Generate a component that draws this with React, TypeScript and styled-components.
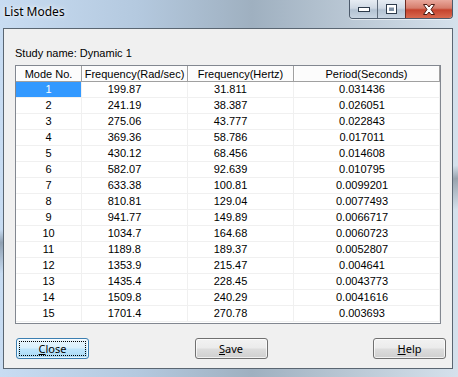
import React from 'react';
import styled, {createGlobalStyle} from 'styled-components'

const GlobalStyle = createGlobalStyle`
  html, body {
    margin: 0;
    padding: 0;
    overflow: hidden;
    background: #ffffff;
  }
`

const Window = styled.div`
  width: 458px;
  height: 377px;
  box-sizing: border-box;
  display: flex;
  flex-direction: column;
  background:
    linear-gradient(172deg, transparent 0 52%, rgba(40, 50, 60, 0.35) 55%, transparent 62%),
    linear-gradient(90deg, #c8dcf2 0%, #b4c9df 30%, #9fb0c0 55%, #b8c6d3 75%, #d5e1ec 100%);
`

const TitleBar = styled.div`
  height: 28px;
  flex: none;
  display: flex;
  justify-content: space-between;
  align-items: flex-start;
  padding-left: 4px;
`

const Title = styled.span`
  font-family: "Noto Sans", "Open Sans", sans-serif;
  font-size: 12px;
  line-height: 16px;
  margin-top: 4px;
  color: #000;
  text-shadow: 0 0 6px rgba(255, 255, 255, 0.9), 0 0 3px rgba(255, 255, 255, 0.9);
`

const CaptionButtons = styled.div`
  display: flex;
  margin-right: 5px;
  border: 1px solid #4c5a6b;
  border-top: 0;
  border-radius: 0 0 4px 4px;
  overflow: hidden;
  box-shadow: 0 1px 0 rgba(255, 255, 255, 0.6);
`

const CaptionButton = styled.div<{ close?: boolean }>`
  width: ${({close}) => (close ? '46px' : '27px')};
  height: 18px;
  flex: none;
  display: flex;
  align-items: center;
  justify-content: center;
  border-left: ${({close}) => (close ? '1px solid #6b2a20' : '1px solid #5e6b7a')};
  background: ${({close}) => close
    ? 'linear-gradient(180deg, #e9a89c 0%, #d67d6c 45%, #c5432d 55%, #d96a4f 100%)'
    : 'linear-gradient(180deg, #e6ecf3 0%, #cfd9e4 45%, #b3c2d2 55%, #c8d5e2 100%)'};

  &:first-child {
    border-left: 0;
  }
`

const Client = styled.div`
  margin-left: 3px;
  width: 450px;
  height: 341px;
  box-sizing: border-box;
  border: 1px solid #5a6672;
  background: #f0f0f0;
  padding: 18px 6px 0 11px;
  display: flex;
  flex-direction: column;
`

const Label = styled.div`
  font-family: "Liberation Sans", Arial, sans-serif;
  font-size: 11px;
  line-height: 13px;
  color: #000;
  height: 13px;
  margin-bottom: 5px;
`

const ListFrame = styled.div`
  width: 426px;
  height: 259px;
  flex: none;
  box-sizing: border-box;
  border: 1px solid #828790;
  background: #ffffff;
  overflow: hidden;
`

const Table = styled.table`
  width: 424px;
  table-layout: fixed;
  border-collapse: separate;
  border-spacing: 0;
  font-family: "Liberation Sans", Arial, sans-serif;
  font-size: 11px;
  color: #000;
`

const Th = styled.th`
  height: 16px;
  box-sizing: border-box;
  padding: 0;
  font-weight: normal;
  text-align: center;
  background: #fcfcfc;
  border-right: 1px solid #a0a0a0;
  border-bottom: 1px solid #a0a0a0;
  box-shadow: inset 1px 0 0 #ffffff;
  line-height: 14px;
`

const Td = styled.td<{ shift: number, selected?: boolean }>`
  height: 16px;
  box-sizing: border-box;
  padding: 0 ${({shift}) => shift}px 0 0;
  line-height: 15px;
  text-align: center;
  border-right: 1px solid #f0f0f0;
  border-bottom: 1px solid #f0f0f0;
  background: ${({selected}) => (selected ? '#3399ff' : '#ffffff')};
  color: ${({selected}) => (selected ? '#ffffff' : '#000000')};
  white-space: nowrap;
`

const ButtonRow = styled.div`
  display: flex;
  justify-content: space-between;
  margin-top: 14px;
  padding-left: 1px;
`

const Button = styled.div<{ focused?: boolean }>`
  width: 73px;
  height: 21px;
  box-sizing: border-box;
  border: 1px solid ${({focused}) => (focused ? '#3c7fb1' : '#707070')};
  border-radius: 3px;
  background: ${({focused}) => focused
    ? 'linear-gradient(180deg, #eaf6fd 0%, #d9f0fc 48%, #bee6fd 52%, #a7d9f5 100%)'
    : 'linear-gradient(180deg, #f2f2f2 0%, #ebebeb 48%, #dddddd 52%, #cfcfcf 100%)'};
  box-shadow: inset 0 0 0 1px rgba(255, 255, 255, 0.7);
  display: flex;
  align-items: center;
  justify-content: center;
  padding: 2px;
  font-family: "Noto Sans", "Open Sans", sans-serif;
  font-size: 11px;
  color: #000;
`

const FocusRect = styled.span<{ focused?: boolean }>`
  flex: 1;
  align-self: stretch;
  display: flex;
  align-items: center;
  justify-content: center;
  border: 1px dotted ${({focused}) => (focused ? '#000' : 'transparent')};
`

const Key = styled.span`
  text-decoration: underline;
`

const rows = [
    ['1', '199.87', '31.811', '0.031436'],
    ['2', '241.19', '38.387', '0.026051'],
    ['3', '275.06', '43.777', '0.022843'],
    ['4', '369.36', '58.786', '0.017011'],
    ['5', '430.12', '68.456', '0.014608'],
    ['6', '582.07', '92.639', '0.010795'],
    ['7', '633.38', '100.81', '0.0099201'],
    ['8', '810.81', '129.04', '0.0077493'],
    ['9', '941.77', '149.89', '0.0066717'],
    ['10', '1034.7', '164.68', '0.0060723'],
    ['11', '1189.8', '189.37', '0.0052807'],
    ['12', '1353.9', '215.47', '0.004641'],
    ['13', '1435.4', '228.45', '0.0043773'],
    ['14', '1509.8', '240.29', '0.0041616'],
    ['15', '1701.4', '270.78', '0.003693'],
]

const shifts = [0, 20, 20, 9]

const MinimizeIcon = () => (
    <svg width="12" height="6" viewBox="0 0 12 6">
        <rect x="0.5" y="1.5" width="11" height="4" fill="#fff" stroke="#2d3b4b"/>
    </svg>
)

const MaximizeIcon = () => (
    <svg width="11" height="10" viewBox="0 0 11 10">
        <rect x="0.5" y="0.5" width="10" height="9" fill="#fff" stroke="#2d3b4b"/>
        <rect x="3" y="3.5" width="5" height="3.5" fill="#7d8fa3"/>
    </svg>
)

const CloseIcon = () => (
    <svg width="14" height="11" viewBox="0 0 14 11">
        <path d="M1.5 0.5 H5 L7 3 L9 0.5 H12.5 L9 5.5 L12.5 10.5 H9 L7 8 L5 10.5 H1.5 L5 5.5 Z"
              fill="#fff" stroke="#4a1a12" strokeWidth="1"/>
    </svg>
)

const App: React.FC = () => {
    return (
        <Window>
            <GlobalStyle/>
            <TitleBar>
                <Title>List Modes</Title>
                <CaptionButtons>
                    <CaptionButton><MinimizeIcon/></CaptionButton>
                    <CaptionButton><MaximizeIcon/></CaptionButton>
                    <CaptionButton close><CloseIcon/></CaptionButton>
                </CaptionButtons>
            </TitleBar>
            <Client>
                <Label>Study name: Dynamic 1</Label>
                <ListFrame>
                    <Table>
                        <colgroup>
                            <col style={{width: 66}}/>
                            <col style={{width: 106}}/>
                            <col style={{width: 106}}/>
                            <col style={{width: 146}}/>
                        </colgroup>
                        <thead>
                        <tr>
                            <Th>Mode No.</Th>
                            <Th>Frequency(Rad/sec)</Th>
                            <Th>Frequency(Hertz)</Th>
                            <Th>Period(Seconds)</Th>
                        </tr>
                        </thead>
                        <tbody>
                        {
                            rows.map((row, i) => (
                                <tr key={row[0]}>
                                    {row.map((value, j) => (
                                        <Td key={j} shift={shifts[j]} selected={i === 0 && j === 0}>
                                            {value}
                                        </Td>
                                    ))}
                                </tr>
                            ))
                        }
                        </tbody>
                    </Table>
                </ListFrame>
                <ButtonRow>
                    <Button focused>
                        <FocusRect focused><span><Key>C</Key>lose</span></FocusRect>
                    </Button>
                    <Button>
                        <FocusRect><span><Key>S</Key>ave</span></FocusRect>
                    </Button>
                    <Button>
                        <FocusRect><span><Key>H</Key>elp</span></FocusRect>
                    </Button>
                </ButtonRow>
            </Client>
        </Window>
    );
};

export default App;
